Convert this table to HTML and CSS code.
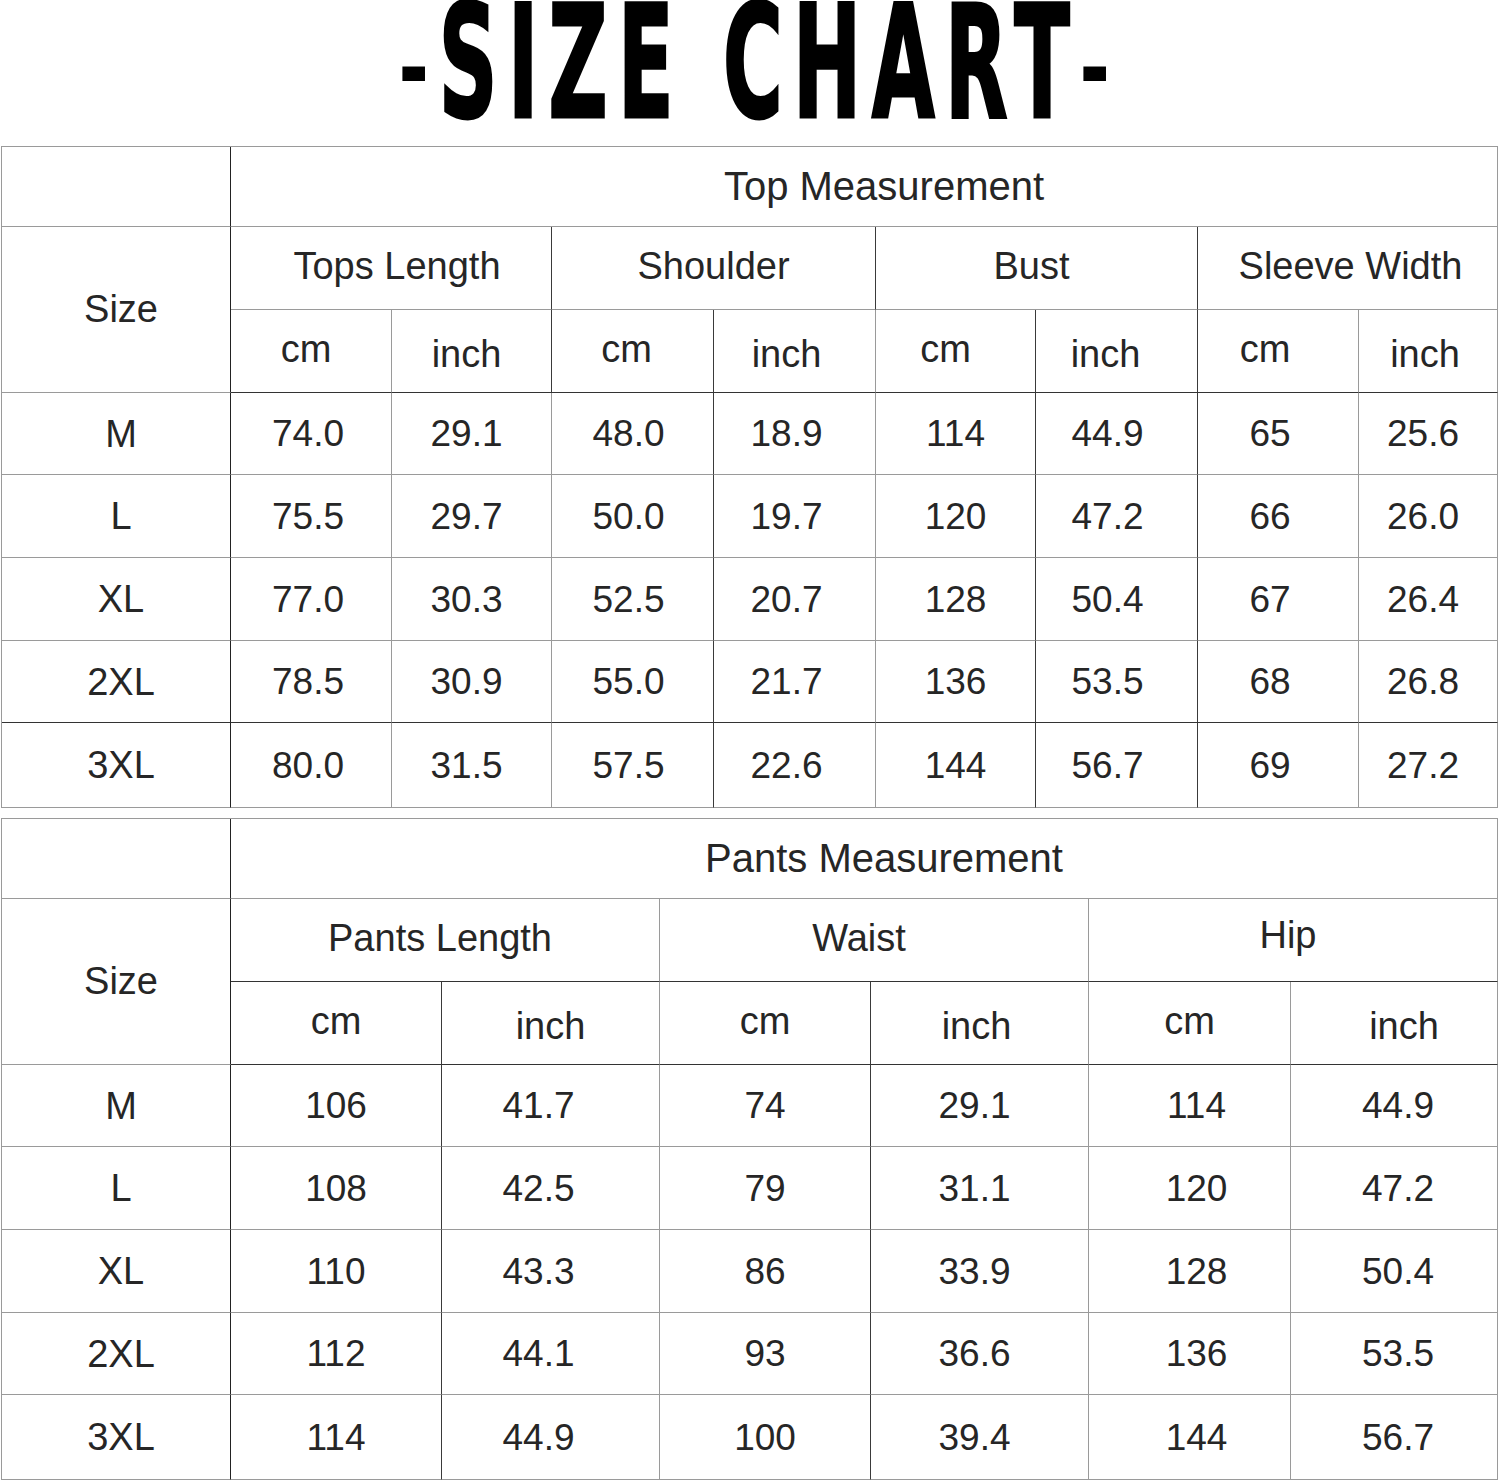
FILE: index.html
```html
<!DOCTYPE html>
<html lang="en">
<head>
<meta charset="utf-8">
<title>Size Chart</title>
<link rel="stylesheet" href="styles.css">
</head>
<body>
<div class="page">
  <header class="title-bar">
    <h1 class="title"><span class="dash">-</span>SIZE CHART<span class="dash">-</span></h1>
  </header>

  <section class="chart chart-top">
    <div class="c r1 c1"></div>
    <div class="c r1 span-top head-main">Top Measurement</div>
    <div class="c size-cell">Size</div>
    <div class="c group r6">Tops Length</div>
    <div class="c group">Shoulder</div>
    <div class="c group l5">Bust</div>
    <div class="c group last r3">Sleeve Width</div>
    <div class="c unit hd vg l5">cm</div><div class="c unit inch hd l5">inch</div>
    <div class="c unit hd l6">cm</div><div class="c unit inch hd vg l8">inch</div>
    <div class="c unit hd l10">cm</div><div class="c unit inch hd l11">inch</div>
    <div class="c unit hd vg l13">cm</div><div class="c unit inch hd last l3">inch</div>

    <div class="c lbl">M</div><div class="c vg l3">74.0</div><div class="c vg l5">29.1</div><div class="c l4">48.0</div><div class="c vg l8">18.9</div><div class="c">114</div><div class="c l9">44.9</div><div class="c vg l8">65</div><div class="c last l5">25.6</div>
    <div class="c lbl">L</div><div class="c vg l3">75.5</div><div class="c vg l5">29.7</div><div class="c l4">50.0</div><div class="c vg l8">19.7</div><div class="c">120</div><div class="c l9">47.2</div><div class="c vg l8">66</div><div class="c last l5">26.0</div>
    <div class="c lbl">XL</div><div class="c vg l3">77.0</div><div class="c vg l5">30.3</div><div class="c l4">52.5</div><div class="c vg l8">20.7</div><div class="c">128</div><div class="c l9">50.4</div><div class="c vg l8">67</div><div class="c last l5">26.4</div>
    <div class="c lbl hd">2XL</div><div class="c vg hd l3">78.5</div><div class="c vg hd l5">30.9</div><div class="c hd l4">55.0</div><div class="c vg hd l8">21.7</div><div class="c hd">136</div><div class="c hd l9">53.5</div><div class="c vg hd l8">68</div><div class="c last hd l5">26.8</div>
    <div class="c lbl">3XL</div><div class="c vg l3">80.0</div><div class="c vg l5">31.5</div><div class="c l4">57.5</div><div class="c vg l8">22.6</div><div class="c">144</div><div class="c l9">56.7</div><div class="c vg l8">69</div><div class="c last l5">27.2</div>
  </section>

  <section class="chart chart-pants">
    <div class="c r1 c1"></div>
    <div class="c r1 span-pants head-main">Pants Measurement</div>
    <div class="c size-cell">Size</div>
    <div class="c group vg hd l5">Pants Length</div>
    <div class="c group vg hd l15">Waist</div>
    <div class="c group last hd hip l5">Hip</div>
    <div class="c unit hd">cm</div><div class="c unit inch hd vg">inch</div>
    <div class="c unit hd">cm</div><div class="c unit inch hd vg l3">inch</div>
    <div class="c unit hd vg">cm</div><div class="c unit inch hd last r10">inch</div>

    <div class="c lbl">M</div><div class="c">106</div><div class="c vg l12">41.7</div><div class="c">74</div><div class="c vg l5">29.1</div><div class="c vg r7">114</div><div class="c last r4">44.9</div>
    <div class="c lbl">L</div><div class="c">108</div><div class="c vg l12">42.5</div><div class="c">79</div><div class="c vg l5">31.1</div><div class="c vg r7">120</div><div class="c last r4">47.2</div>
    <div class="c lbl">XL</div><div class="c">110</div><div class="c vg l12">43.3</div><div class="c">86</div><div class="c vg l5">33.9</div><div class="c vg r7">128</div><div class="c last r4">50.4</div>
    <div class="c lbl">2XL</div><div class="c">112</div><div class="c vg l12">44.1</div><div class="c">93</div><div class="c vg l5">36.6</div><div class="c vg r7">136</div><div class="c last r4">53.5</div>
    <div class="c lbl">3XL</div><div class="c">114</div><div class="c vg l12">44.9</div><div class="c">100</div><div class="c vg l5">39.4</div><div class="c vg r7">144</div><div class="c last r4">56.7</div>
  </section>
</div>
</body>
</html>
```

FILE: styles.css
```css
html, body {
  margin: 0;
  padding: 0;
  background: #ffffff;
}

.page {
  width: 1500px;
  font-family: "Liberation Sans", Arial, sans-serif;
  color: #262626;
}

.title-bar {
  height: 146px;
  display: flex;
  justify-content: center;
  align-items: flex-start;
}

.title {
  margin: 0 -18px 0 0;
  font-family: "DejaVu Sans Condensed", "DejaVu Sans", sans-serif;
  font-weight: 700;
  font-size: 156px;
  line-height: 126px;
  letter-spacing: 18px;
  color: #000;
  -webkit-text-stroke: 3px #000;
  transform: scaleX(0.58);
  white-space: nowrap;
}

.title .dash {
  font-weight: 400;
  -webkit-text-stroke: 2px #000;
}

.chart {
  display: grid;
  margin-left: 1px;
  width: 1496px;
  border-top: 1px solid #9a9a9a;
  border-left: 1px solid #9a9a9a;
}

.chart-top {
  grid-template-columns: 229px 161px 160px 162px 162px 160px 162px 161px 139px;
  grid-template-rows: 80px 83px 83px 82px 83px 83px 82px 85px;
}

.chart-pants {
  margin-top: 10px;
  grid-template-columns: 229px 211px 218px 211px 218px 202px 207px;
  grid-template-rows: 80px 83px 83px 82px 83px 83px 82px 85px;
}

.c {
  box-sizing: border-box;
  display: flex;
  align-items: center;
  justify-content: center;
  border-right: 1px solid #3a3a3a;
  border-bottom: 1px solid #9a9a9a;
  font-size: 37px;
  line-height: 1;
}

.c.vg { border-right-color: #9a9a9a; }
.c.hd { border-bottom-color: #333333; }
.c.last { border-right-color: #9a9a9a; }

.c1 { border-right-color: #222; }
.lbl {
  border-right-color: #222;
  padding-left: 10px;
  font-size: 38px;
}

.span-top { grid-column: 2 / span 8; border-right-color: #9a9a9a; }
.span-pants { grid-column: 2 / span 6; border-right-color: #9a9a9a; }

.head-main {
  font-size: 40px;
  padding-left: 40px;
  padding-bottom: 2px;
}

.size-cell {
  grid-row: span 2;
  border-right-color: #222;
  padding-left: 10px;
  padding-bottom: 2px;
  font-size: 38px;
}

.group {
  grid-column: span 2;
  font-size: 38px;
  padding-bottom: 4px;
}

.group.hip {
  padding-bottom: 10px;
}

.unit {
  font-size: 38px;
  padding-bottom: 4px;
}

.unit.inch {
  padding-top: 6px;
  padding-bottom: 0;
}

/* small horizontal nudges of centred text */
.l3 { padding-right: 6px; }
.l4 { padding-right: 8px; }
.l5 { padding-right: 10px; }
.l6 { padding-right: 12px; }
.l8 { padding-right: 16px; }
.l9 { padding-right: 18px; }
.l10 { padding-right: 20px; }
.l11 { padding-right: 22px; }
.l12 { padding-right: 24px; }
.l13 { padding-right: 26px; }
.l15 { padding-right: 30px; }
.r3 { padding-left: 6px; }
.r4 { padding-left: 8px; }
.r6 { padding-left: 12px; }
.r7 { padding-left: 14px; }
.r10 { padding-left: 20px; }
```
